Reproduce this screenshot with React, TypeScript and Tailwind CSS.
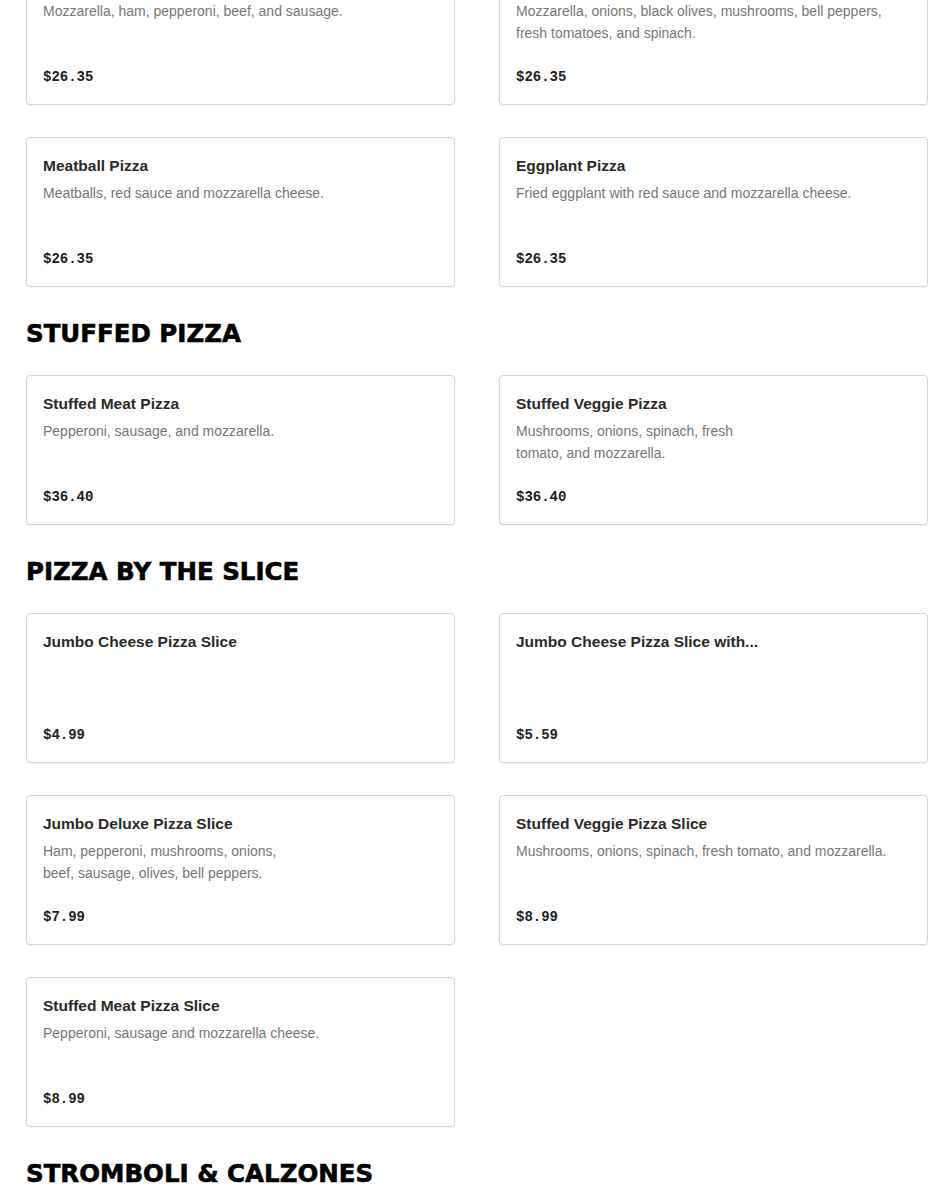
import type { ReactNode } from 'react'

type Item = {
  name: string
  desc?: ReactNode
  price: string
}

type Section = {
  title?: string
  items: Item[]
}

const sections: Section[] = [
  {
    items: [
      { name: 'Meat Lovers Pizza', desc: 'Mozzarella, ham, pepperoni, beef, and sausage.', price: '$26.35' },
      {
        name: 'Veggie Pizza',
        desc: 'Mozzarella, onions, black olives, mushrooms, bell peppers, fresh tomatoes, and spinach.',
        price: '$26.35',
      },
      { name: 'Meatball Pizza', desc: 'Meatballs, red sauce and mozzarella cheese.', price: '$26.35' },
      { name: 'Eggplant Pizza', desc: 'Fried eggplant with red sauce and mozzarella cheese.', price: '$26.35' },
    ],
  },
  {
    title: 'STUFFED PIZZA',
    items: [
      { name: 'Stuffed Meat Pizza', desc: 'Pepperoni, sausage, and mozzarella.', price: '$36.40' },
      {
        name: 'Stuffed Veggie Pizza',
        desc: (
          <>
            Mushrooms, onions, spinach, fresh
            <br />
            tomato, and mozzarella.
          </>
        ),
        price: '$36.40',
      },
    ],
  },
  {
    title: 'PIZZA BY THE SLICE',
    items: [
      { name: 'Jumbo Cheese Pizza Slice', price: '$4.99' },
      { name: 'Jumbo Cheese Pizza Slice with...', price: '$5.59' },
      {
        name: 'Jumbo Deluxe Pizza Slice',
        desc: (
          <>
            Ham, pepperoni, mushrooms, onions,
            <br />
            beef, sausage, olives, bell peppers.
          </>
        ),
        price: '$7.99',
      },
      {
        name: 'Stuffed Veggie Pizza Slice',
        desc: 'Mushrooms, onions, spinach, fresh tomato, and mozzarella.',
        price: '$8.99',
      },
      { name: 'Stuffed Meat Pizza Slice', desc: 'Pepperoni, sausage and mozzarella cheese.', price: '$8.99' },
    ],
  },
  {
    title: 'STROMBOLI & CALZONES',
    items: [],
  },
]

function MenuCard({ item }: { item: Item }) {
  return (
    <div className="flex flex-col h-[150px] bg-white rounded border border-[#d6d6d6] p-4 shadow-[0_1px_2px_rgba(0,0,0,0.06)]">
      <h3 className="text-[15.5px] leading-6 font-bold text-[#2a2a2a] mb-1 whitespace-nowrap overflow-hidden">
        {item.name}
      </h3>
      {item.desc && <p className="text-[14px] leading-[22px] text-[#777]">{item.desc}</p>}
      <p className="mt-auto text-[14px] leading-[22px] font-bold text-[#222] font-['Liberation_Mono',monospace]">
        {item.price}
      </p>
    </div>
  )
}

export default function App() {
  return (
    <div className="min-h-screen bg-white overflow-hidden font-['Liberation_Sans',Arial,sans-serif]">
      <div className="pl-[26px] pr-[22px] -mt-[45px]">
        {sections.map((section, i) => (
          <section key={i}>
            {section.title && (
              <h2 className="mt-[29px] mb-[23px] h-9 leading-9 text-[24.5px] font-bold text-black font-['DejaVu_Sans',sans-serif] [-webkit-text-stroke:0.6px_black]">
                {section.title}
              </h2>
            )}
            {section.items.length > 0 && (
              <div className="grid grid-cols-2 gap-x-[44px] gap-y-[32px]">
                {section.items.map((item) => (
                  <MenuCard key={item.name} item={item} />
                ))}
              </div>
            )}
          </section>
        ))}
      </div>
    </div>
  )
}
